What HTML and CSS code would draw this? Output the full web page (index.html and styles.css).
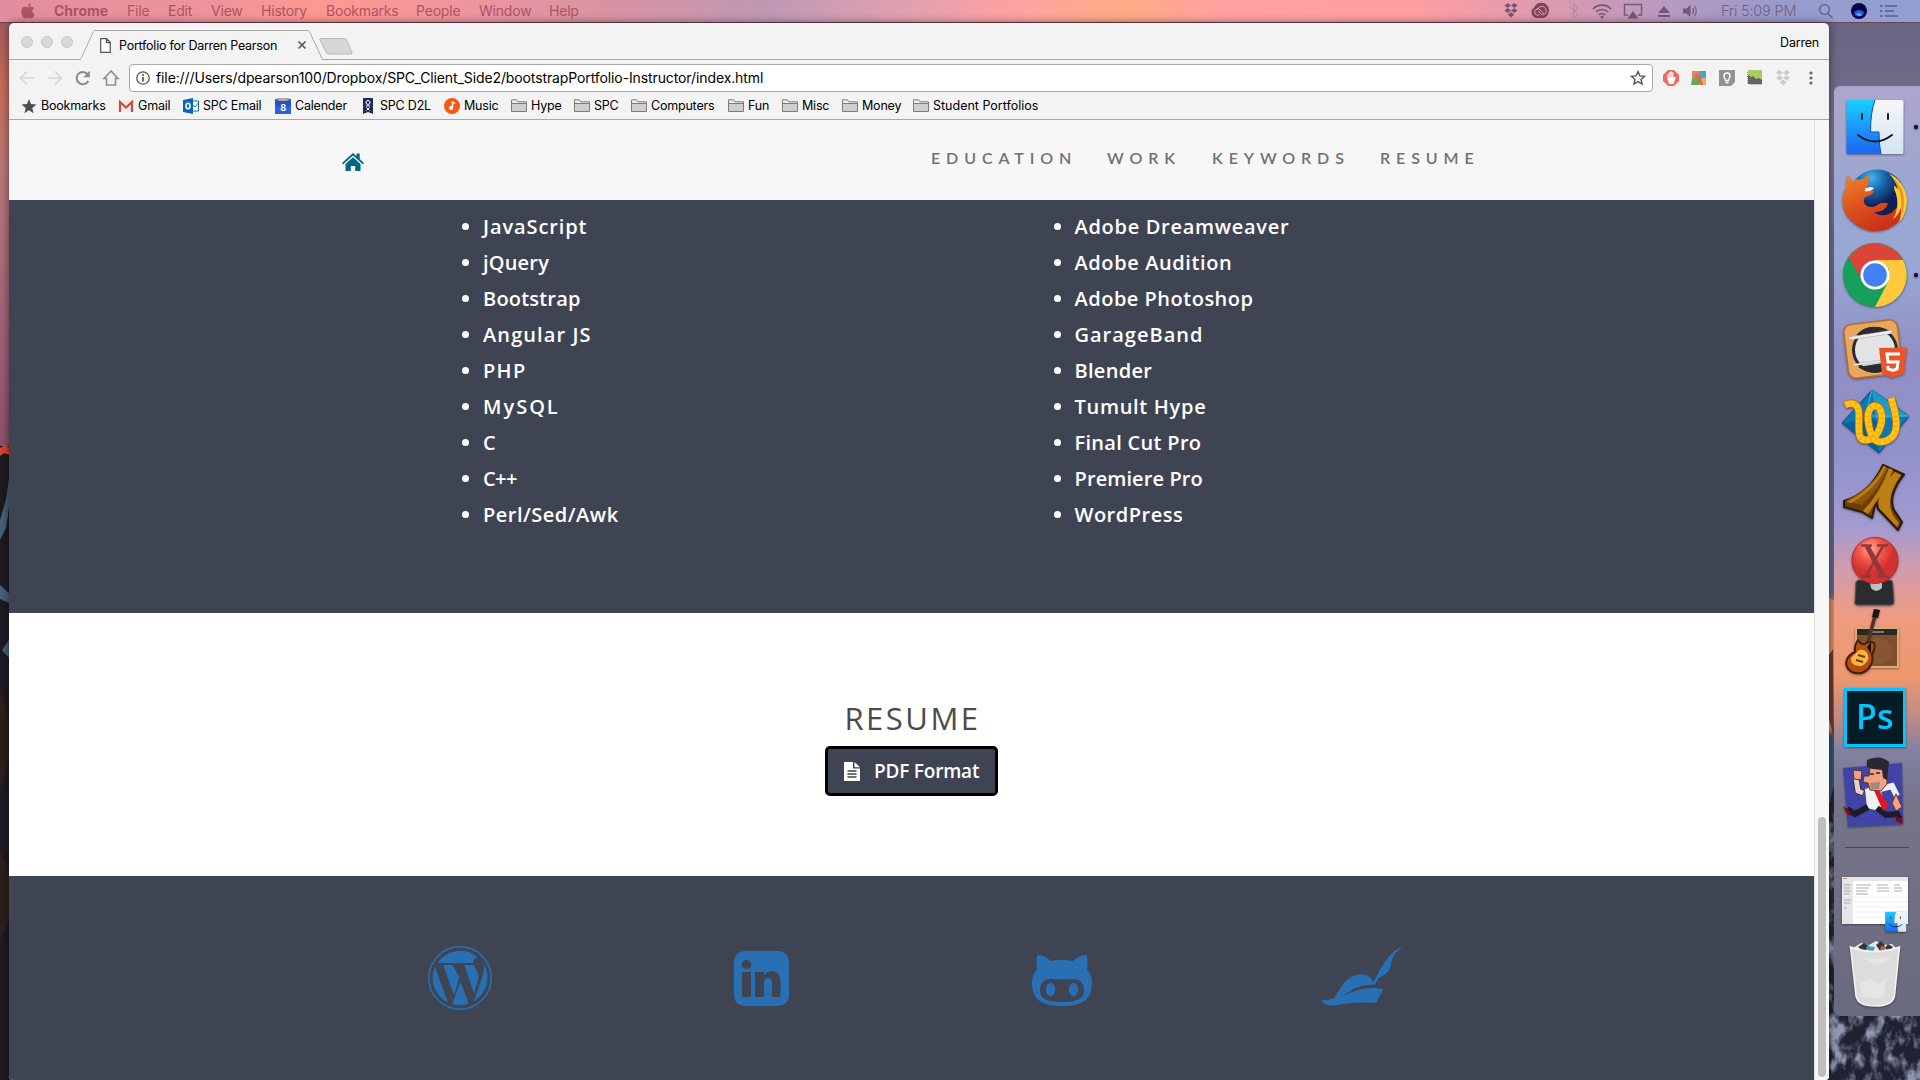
FILE: index.html
```html
<!DOCTYPE html>
<html lang="en">
<head>
<meta charset="utf-8">
<title>Portfolio for Darren Pearson</title>
<link rel="stylesheet" href="styles.css">
</head>
<body>
<svg class="defs" width="0" height="0">
  <symbol id="folder" viewBox="0 0 16 13"><path d="M.5 12.500V.8h5l1.500 2h8.500v9.700z" fill="#ececec" stroke="#7d7d7d"/><path d="M1 5h14v7H1z" fill="#cfcfcf"/><path d="M1 4.500h14" stroke="#7d7d7d"/></symbol>
  <symbol id="dropbox" viewBox="0 0 16 16"><path d="M4.500 0 8 2.600 4.500 5.200 1 2.600zM11.500 0 15 2.600l-3.500 2.600L8 2.600zM4.500 5.400 8 8l-3.500 2.600L1 8zM11.500 5.400 15 8l-3.500 2.600L8 8zM8 9.500l3.500 2.700L8 15.500l-3.500-3.300z" stroke="none"/></symbol>
</svg>
<div class="desktop">
  <svg class="wallpaper" width="1920" height="1080" viewBox="0 0 1920 1080">
    <defs>
      <linearGradient id="dusk" x2="0" y2="1"><stop stop-color="#a05a5c"/><stop offset=".15" stop-color="#c96a58"/><stop offset=".35" stop-color="#b9787a"/><stop offset=".8" stop-color="#9a5d75"/><stop offset="1" stop-color="#8d5069"/></linearGradient>
      <filter id="crags" x="0" y="0" width="1" height="1"><feTurbulence type="fractalNoise" baseFrequency=".07 .045" numOctaves="4" seed="8"/><feColorMatrix values="0 0 0 0 .29  0 0 0 0 .31  0 0 0 0 .43  4 0 0 0 -1.8"/></filter>
    </defs>
    <path d="M0 23h12v425H0z" fill="url(#dusk)"/>
    <path d="M0 446h12v634H0z" fill="#1d1a22"/>
    <path d="M0 448l5-3 7 4v7L4 453l-4 3z" fill="#d8432f"/>
    <path d="M9 478l-3 22-6 20v20l6-12 3-20zM0 585l9 8v10l-9-4zM9 640l-7 10 7 8z" fill="#466078"/>
    <path d="M0 690l9 30v40l-9 30zM0 850l9 20v50l-9 20z" fill="#2b211c"/>
    <path d="M1829 598l5 2v130h-5z" fill="#d98b62"/>
    <path d="M1829 655l4-6 1 90-5-20z" fill="#6b3a32"/>
    <path d="M1829 735h5v280h86v65h-91z" fill="#1f2231"/>
    <path d="M1829 735h5v50l-5 20z" fill="#36516e"/>
    <rect x="1829" y="800" width="91" height="280" filter="url(#crags)"/>
  </svg>
  <header class="menubar">
    <svg class="apple" width="14" height="16" viewBox="0 0 14 16"><path d="M9.800.2c.1 1.700-1.300 3.300-3 3.300C6.600 1.900 8.200.3 9.800.2zM7 4.400c.7 0 1.700-.8 3.200-.7 1.300.1 2.300.6 2.900 1.600-2.700 1.700-2.100 5 .6 6-.8 2.200-2.100 4.200-3.500 4.200-1 0-1.600-.6-2.900-.6s-2 .6-2.900.6C2.300 15.500.2 11.700.2 8.500c0-3.100 1.900-4.700 3.800-4.700 1.200 0 2.300.6 3 .6z"/></svg>
    <nav class="menus">
      <b>Chrome</b><span>File</span><span>Edit</span><span>View</span><span>History</span><span>Bookmarks</span><span>People</span><span>Window</span><span>Help</span>
    </nav>
    <div class="status">
      <svg viewBox="0 0 18 16"><use href="#dropbox" width="18" height="15"/></svg>
      <svg viewBox="0 0 20 16"><path d="M6 15A5.800 5.800 0 0 1 3.500 4.500 7.800 7.800 0 1 1 13 14.900z" fill="#81425c" transform="translate(-1.500 0)"/><path d="M7.500 11.800a3.200 3.200 0 1 1 .3-5.300l4 4.500M5.500 6.500a4.500 4.500 0 1 1 7 5c-1.500.8-3 .3-4-.9L6.500 8" fill="none" stroke="#e2a2b2" stroke-width="1"/></svg>
      <svg class="faint" viewBox="0 0 12 16"><path d="m2 4 8 7-4 4V1l4 4-8 7" fill="none" stroke="#785a77"/></svg>
      <svg viewBox="0 0 20 16"><g fill="none" stroke="#7b5475" stroke-width="1.700"><path d="M1 6a12.500 12.500 0 0 1 18 0M4 9a8.500 8.500 0 0 1 12 0M6.700 11.800a4.800 4.800 0 0 1 6.600 0"/></g><circle cx="10" cy="14" r="1.500"/></svg>
      <svg viewBox="0 0 20 16"><path d="M5 12H1.500V1.500h17V12H15" fill="none" stroke="#765779" stroke-width="1.400"/><path d="m10 8 5.500 7.500h-11z"/></svg>
      <svg viewBox="0 0 12 16"><path d="m6 3 6 7H0zM0 12h12v2H0z"/></svg>
      <svg viewBox="0 0 14 16"><path d="M0 5.500h3.500L7.500 2v12l-4-3.500H0z"/><path d="M9.500 5q2 3 0 6M11.500 3q3.500 5 0 10" fill="none" stroke="#6c6089" stroke-width="1.200"/></svg>
      <span class="clock">Fri 5:09 PM</span>
      <svg viewBox="0 0 16 16"><path d="M10 10.500 14.500 15" stroke="#66608f" stroke-width="1.600"/><circle cx="6.500" cy="6.500" r="4.900" fill="none" stroke="#66608f" stroke-width="1.400"/></svg>
      <svg viewBox="0 0 16 16"><circle cx="8" cy="8" r="8" fill="#060449"/><path d="M3 9q5-4 10 0l-1 3q-4 3-8 0z" fill="#205fdd"/><path d="m5 11 3-1 3 2-3 1z" fill="#8da9f6"/></svg>
      <svg viewBox="0 0 18 16"><path d="M0 3h2.500M0 8h2.500M0 13h2.500M5 3h12M5 8h9M5 13h13" stroke="#595b94" stroke-width="1.700"/></svg>
    </div>
  </header>

  <div class="stage">
  <main class="window">
    <div class="tabstrip">
      <i class="light"></i><i class="light"></i><i class="light"></i>
      <div class="tab">
        <svg class="tab-shape" width="243" height="30" viewBox="0 0 243 30"><path d="M0 28.500 12.500 1.500Q13 .5 14 .5h213q1 0 1.500 1L241 28.500V30H0z" fill="#f3f3f3"/><path d="M0 28.500 12.500 1.500Q13 .5 14 .5h213q1 0 1.500 1L241 28.500" fill="none" stroke="#a8a8a8"/></svg>
        <svg width="11" height="15" viewBox="0 0 11 15"><path d="M.7.700h5.800l3.800 3.800v9.800H.7zM6.500.700v4h4" fill="#fff" stroke="#555" stroke-width="1.200"/></svg>
        <span class="tab-title">Portfolio for Darren Pearson</span>
        <svg width="8" height="8" viewBox="0 0 8 8"><path d="m.5.500 7 7m0-7-7 7" stroke="#5a5a5a" stroke-width="1.700"/></svg>
      </div>
      <svg class="newtab" width="34" height="17" viewBox="0 0 34 17"><path d="M2 .5h23.500q1.500 0 2 1.200L33 14.500q.5 1.500-1 1.500H9.500Q8 16 7.400 14.700L1 2Q.4.500 2 .5z" fill="#d6d6d6" stroke="#b9b9b9"/></svg>
      <span class="user">Darren</span>
    </div>
    <div class="toolbar">
      <svg class="nav-off" viewBox="0 0 16 16"><path d="M15 8H2m6-6.500L1.500 8 8 14.500"/></svg>
      <svg class="nav-off" viewBox="0 0 16 16"><path d="M1 8h13M8 1.500 14.500 8 8 14.500"/></svg>
      <svg viewBox="0 0 16 16"><path d="M13.300 11A6.200 6.200 0 1 1 12.500 4" fill="none" stroke="#8a8a8a" stroke-width="2"/><path d="M14.800.8v6.400H8.500z" fill="#8a8a8a"/></svg>
      <svg viewBox="0 0 16 16"><path d="M8 1 1 8.500h2.500V15h9V8.500H15z" fill="none" stroke="#8f8f8f" stroke-width="1.600"/></svg>
      <div class="address">
        <svg width="14" height="14" viewBox="0 0 14 14"><circle cx="7" cy="7" r="6.200" fill="none" stroke="#555" stroke-width="1.300"/><path d="M7 6v4.500M7 3.200v1.700" stroke="#444" stroke-width="1.600"/></svg>
        <span class="url">file:///Users/dpearson100/Dropbox/SPC_Client_Side2/bootstrapPortfolio-Instructor/index.html</span>
        <svg class="fav" width="16" height="16" viewBox="0 0 16 16"><path d="m8 1.500 1.900 4.400 4.700.4L11 9.400l1.100 4.700L8 11.600l-4.100 2.500L5 9.400 1.400 6.300l4.700-.4z" fill="none" stroke="#555" stroke-width="1.400"/></svg>
      </div>
      <div class="extensions">
        <svg viewBox="0 0 16 16"><path d="M5 0h6l5 5v6l-5 5H5l-5-5V5z" fill="#ec6a60"/><path d="M4.300 9V4.500h1.500v-2h1.500v-1h1.600v1h1.500v5l1.500-.7.900.9-2.500 6.300H6.200z" fill="#fff"/><path d="M5.900 5v3m1.600-4v3.500m1.500-3.500v3.500" stroke="#ec6a60" stroke-width=".5"/></svg>
        <svg viewBox="0 0 16 16"><path d="M1 1h7v7H1z" fill="#e7835e"/><path d="M8 1h7v7H8z" fill="#4ba3c6"/><path d="M1 8h7v7H0z" fill="#64a957"/><path d="M8 8h7v7H8z" fill="#dfb356"/><path d="m6 3 4 5 2 7H9l-2-5-4-4z" fill="#d66a4d"/></svg>
        <svg viewBox="0 0 16 16"><path d="M0 0h16v12l-4 4H0z" fill="#929292"/><path d="M6.500 10.500C6.500 9 5 8.300 5 6a3 3 0 0 1 6 0c0 2.300-1.500 3-1.500 4.500zM6.500 12.500h3" fill="none" stroke="#fff" stroke-width="1.400"/></svg>
        <svg viewBox="0 0 16 16"><path d="M1 0h14v14H1z" fill="#a8cc62"/><path d="m1 5 3 2 2-1 3 3 3-1 3 2v4H1z" fill="#606662"/><path d="M.5 2v12m3 .5h12" stroke="#999" stroke-dasharray="1 1"/></svg>
        <svg viewBox="0 0 16 16" fill="#ccc"><use href="#dropbox"/></svg>
        <svg viewBox="0 0 16 16" fill="#686868"><circle cx="8" cy="3" r="1.600"/><circle cx="8" cy="8" r="1.600"/><circle cx="8" cy="13" r="1.600"/></svg>
      </div>
    </div>
    <div class="bookmarks">
      <a><svg viewBox="0 0 16 16"><path d="m8 1 2 5 5.500.4-4.200 3.500 1.300 5.300L8 12.300l-4.600 2.900 1.300-5.300L.5 6.400 6 6z" fill="#4f4f4f"/></svg><span>Bookmarks</span></a>
      <a><svg viewBox="0 0 16 16"><path d="M1 3h14v11H1z" fill="#ececec"/><path d="M2 14V4l6 5.500L14 4v10" fill="none" stroke="#d3483c" stroke-width="2.200"/></svg><span>Gmail</span></a>
      <a><svg viewBox="0 0 16 16"><path d="M8 3h7.500v10H8z" fill="#fff" stroke="#1668b5"/><path d="m9 6 3 3 4-5" fill="none" stroke="#1668b5"/><path d="M0 2 10 0v16L0 14z" fill="#0668bb"/><ellipse cx="5" cy="8" rx="2" ry="2.800" fill="none" stroke="#fff" stroke-width="1.500"/></svg><span>SPC Email</span></a>
      <a><svg viewBox="0 0 16 16"><path d="M2 0h12v3H2z" fill="#aaa"/><path d="M0 1h2l2 2h8l2-2h2v15H0z" fill="#2b62df"/><path d="M0 3h16v5H0z" fill="#2353c4"/><text x="8" y="12.500" class="cal">8</text></svg><span>Calender</span></a>
      <a><svg viewBox="0 0 16 16"><path d="M3 0h10v16l-5-2-5 2z" fill="#222a60"/><circle cx="8" cy="4.500" r="2" fill="none" stroke="#fff"/><path d="M6 8h4M6.500 9.500l3 3m0-3-3 3" stroke="#fff"/></svg><span>SPC D2L</span></a>
      <a><svg viewBox="0 0 16 16"><circle cx="8" cy="8" r="8" fill="#fb5614"/><circle cx="7" cy="10" r="2" fill="#fff"/><path d="M8.500 10V4l2.500 1.500" fill="none" stroke="#fff" stroke-width="1.400"/></svg><span>Music</span></a>
      <a><svg class="fold" viewBox="0 0 16 13"><use href="#folder"/></svg><span>Hype</span></a>
      <a><svg class="fold" viewBox="0 0 16 13"><use href="#folder"/></svg><span>SPC</span></a>
      <a><svg class="fold" viewBox="0 0 16 13"><use href="#folder"/></svg><span>Computers</span></a>
      <a><svg class="fold" viewBox="0 0 16 13"><use href="#folder"/></svg><span>Fun</span></a>
      <a><svg class="fold" viewBox="0 0 16 13"><use href="#folder"/></svg><span>Misc</span></a>
      <a><svg class="fold" viewBox="0 0 16 13"><use href="#folder"/></svg><span>Money</span></a>
      <a><svg class="fold" viewBox="0 0 16 13"><use href="#folder"/></svg><span class="long">Student Portfolios</span></a>
    </div>

    <div class="viewport">
      <div class="page">
        <div class="navbar">
          <svg class="home" width="22" height="18" viewBox="0 0 22 18"><path d="M11 0 14.500 3.200V.5h3.200v5.600L22 10l-1.200 1.200L11 2.400l-9.800 8.800L0 10z"/><path d="M11 4.200 18.500 11v7h-5.300v-5H8.800v5H3.500v-7z"/></svg>
          <nav class="links"><a>EDUCATION</a><a>WORK</a><a>KEYWORDS</a><a>RESUME</a></nav>
        </div>
        <section class="skills">
          <ul class="languages"><li>JavaScript</li><li>jQuery</li><li>Bootstrap</li><li>Angular JS</li><li>PHP</li><li>MySQL</li><li>C</li><li>C++</li><li>Perl/Sed/Awk</li></ul>
          <ul class="apps"><li>Adobe Dreamweaver</li><li>Adobe Audition</li><li>Adobe Photoshop</li><li>GarageBand</li><li>Blender</li><li>Tumult Hype</li><li>Final Cut Pro</li><li>Premiere Pro</li><li>WordPress</li></ul>
        </section>
        <section class="resume">
          <h2>RESUME</h2>
          <a class="pdf"><svg width="16" height="19" viewBox="0 0 16 19"><path d="M0 0h9v6.500h7V19H0zM10.500 0 16 5.200h-5.500z" fill="#fff"/><path d="M3.500 9h9M3.500 12h9M3.500 15h9" stroke="#3f4453" stroke-width="1.300"/></svg><span>PDF Format</span></a>
        </section>
        <footer class="social">
          <svg width="64" height="64" viewBox="0 0 64 64"><circle cx="32" cy="32" r="31.200" fill="none" stroke="#286fb4" stroke-width="1.500"/><path d="M9.500 17.300A27.200 27.200 0 0 1 50.400 11.700c-3.400-.2-5.400 2-5.100 5.300H9.500zM7 20.800 20 56.400A27.200 27.200 0 0 1 7 20.800zM32.500 35.500 40.700 57.500q-8 3-16.500.7zM56.300 19A27.200 27.200 0 0 1 45.800 55.400L54.500 30q2-6 1.800-11zM15 19h9.500l7 12-5.500 18zM36.500 19h9.200c1 3 4.800 6.500 4.800 12.500l-4.500 16z"/></svg>
          <svg width="55" height="55" viewBox="0 0 55 55"><rect width="55" height="55" rx="10.500"/><g fill="#3f4453"><ellipse cx="12.500" cy="13.500" rx="4.900" ry="4.400"/><path d="M8 21h9v25H8zM21 21h9v3.500c2-3 4.500-4.200 7.500-4.200 6.500 0 9 4.500 9 11V46H38V32.500c0-3.500-1.200-5.500-4-5.500s-4 2.400-4 5v14h-9z"/></g></svg>
          <svg width="60" height="51" viewBox="0 0 60 51"><path fill-rule="evenodd" d="M5.500 0C11 .3 15 2.700 19 6q11-2 22 0C45 2.700 49 .3 54.500 0q2 7 .5 14.500c4 5 5 9 5 14C60 46 48 51 30 51S0 46 0 28.500c0-5 1-9 5-14Q3.500 7 5.500 0zM8 35c0 9 7 12 22 12s22-3 22-12c0-7-4-11-10-11-8 0-16 1-24 0-6 0-10 4-10 11z"/><ellipse cx="18.500" cy="34.500" rx="4.600" ry="6.700"/><ellipse cx="41.500" cy="34.500" rx="4.600" ry="6.700"/></svg>
          <svg width="82" height="60" viewBox="0 0 82 60"><path d="M0 54.500c5-.5 9-.8 13.500-2.200C20 39 28 29 39 28.300 46 28 51 32 52 36.500 58 27 66 6 82 0c-9 7-11 12-12.500 20-1.500 8-8 9-12 12.500L53.500 39C41 38 31 43 20.500 51 32 45 44 40 62.500 43L55 57c-15-1-28 0-40 2.200C9 60 3 59 0 54.500z"/></svg>
        </footer>
      </div>
      <div class="scrollbar"><i></i></div>
    </div>
  </main>

  <aside class="dock">
    <svg viewBox="0 0 86 74"><defs><linearGradient id="fb" x2="0" y2="1"><stop stop-color="#19cfff"/><stop offset="1" stop-color="#1c64f2"/></linearGradient><linearGradient id="fw" x2="0" y2="1"><stop stop-color="#f6f6f8"/><stop offset="1" stop-color="#d4e4f3"/></linearGradient></defs><g id="finder"><rect x="12.500" y="10" width="57" height="54" rx="1.500" fill="url(#fb)"/><path d="M41 10h27q1.500 0 1.500 1.500v51q0 1.500-1.500 1.500H47q-2-9-2-22h-8.500q0-20 4.500-32z" fill="url(#fw)"/><path d="M41 10q-4.500 12-4.500 32H45q0 13 2 22" fill="none" stroke="#14509c"/><path d="M28 24v5M54 24v5" stroke="#10232e" stroke-width="2" stroke-linecap="round"/><path d="M24 45q17 13 34 0" fill="none" stroke="#101820" stroke-width="2" stroke-linecap="round"/></g><circle cx="82" cy="37" r="2.200" fill="#10184a"/></svg>
    <svg viewBox="0 0 86 74"><defs><radialGradient id="globe" cx=".4" cy=".15"><stop stop-color="#42b6ee"/><stop offset=".5" stop-color="#1565a8"/><stop offset="1" stop-color="#101f55"/></radialGradient><linearGradient id="fox" x2=".5" y2="1"><stop stop-color="#ee8a2a"/><stop offset=".5" stop-color="#e0541f"/><stop offset="1" stop-color="#c9301a"/></linearGradient></defs><g transform="translate(0 1.500)"><circle cx="43" cy="32" r="28" fill="url(#globe)"/><path d="M14 9l4 7q5-3 9-2 4-1 7-5 2 8-1 13l7 4q-2 4-8 5-4 3-1 8 6 5 13 0 5-3 10-1-2 8-14 9 10 6 19-1 8-7 8-19 5 4 5 12-2 18-20 25-16 5-29-4Q8 50 8.500 35q0-8 4-14-1-6 1.500-12z" fill="url(#fox)"/><path d="M55 8q15 7 18 26 0 14-8 23 3-9 2-15-2 7-8 12 7-13 3-26-2-3-2-8 2 1 4 4-2-9-9-16z" fill="#ffcd32"/><path d="M61 15q9 12 7 27M66 22q5 10 2 25" fill="none" stroke="#ea8a20" stroke-width="1.500"/><path d="M31 23q7-3 9 0-3 3-9 3z" fill="#fff1df"/></g></svg>
    <svg viewBox="0 0 86 74"><circle cx="41" cy="37" r="32" fill="#16a05a"/><path d="M14.500 19.500a32 32 0 0 1 54.500 2.500H41q-13 2-14 18z" fill="#da4439"/><path d="M69 22A32 32 0 0 1 41 69l12.500-24L55 31 41 22z" fill="#ffc83d"/><circle cx="41" cy="37" r="14.500" fill="#fff"/><circle cx="41" cy="37" r="11.800" fill="#437ff5"/><circle cx="82" cy="37" r="2.200" fill="#10184a"/></svg>
    <svg viewBox="0 0 86 74"><rect x="12" y="10" width="54" height="54" rx="8" fill="#e9a75b" stroke="#b66f2d" stroke-width="1.500" transform="rotate(-7 39 37)"/><circle cx="41" cy="38" r="23" fill="#292b30"/><circle cx="41" cy="38" r="20" fill="#e2e3e4"/><path d="M22 23q9-10 22-8 9 1 14 6zM24 55l25-4 2 7q-15 6-27-3z" fill="#292b30"/><path d="M15 25l43-7v3.500L15 28zM19 52l30-4v2l-30 4z" fill="#f0f0f0" stroke="#888" stroke-width=".4"/><path d="m45 36 28-.5-3 26.500-12 4-10-4z" fill="#e95428"/><path d="M66 42H53l1 8h10l-1 7-4 1.500-5-1.500v-3" fill="none" stroke="#fff" stroke-width="3"/></svg>
    <svg viewBox="0 0 86 74"><path d="m38 4 37 26-30 37L8 37z" fill="#0879b4" stroke="#034d82"/><path d="m38 4 37 26-33 3z" fill="#1a9cc6"/><path d="M8 37l34-4 3 34z" fill="#065f9c"/><path d="M38 4 31 30l44 0" fill="none" stroke="#41b9d9"/><g fill="none"><path d="M11 19c9-4 14 0 14 10 0 16-2 26 8 25 12-1 18-20 13-31-5-7-13-2-12 11 2 18 8 26 20 20 10-5 11-17 3-42" stroke="#b66e08" stroke-width="8"/><path d="M11 19c9-4 14 0 14 10 0 16-2 26 8 25 12-1 18-20 13-31-5-7-13-2-12 11 2 18 8 26 20 20 10-5 11-17 3-42" stroke="#ffc31c" stroke-width="6.500"/><path d="M11 19c9-4 14 0 14 10 0 16-2 26 8 25 12-1 18-20 13-31-5-7-13-2-12 11 2 18 8 26 20 20 10-5 11-17 3-42" stroke="#eda512" stroke-width="5" stroke-dasharray="1 4"/></g></svg>
    <svg viewBox="0 0 86 74"><path d="M49 5 70 14.500C58 29 56 42 60 50l8 12-4 8-20-21-2-8-4 17-10-6-18-5v-6C30 35 42 20 49 5z" fill="#6b3e05" stroke="#2d1905" stroke-width="2" stroke-linejoin="round"/><path d="M49 6Q38 28 11 41l17 4Q46 28 54 8z" fill="#8d5707"/><path d="M50 6Q40 28 13 42l4 1Q42 29 52 7zM55 8Q47 32 29 51l5 3Q51 30 59 10zM61 12Q42 30 45 48l18 19 2-4Q46 44 67 15z" fill="#bd7e14"/></svg>
    <svg viewBox="0 0 86 74"><defs><radialGradient id="red" cx=".4" cy=".25"><stop stop-color="#ffb09c"/><stop offset=".5" stop-color="#f4574a"/><stop offset="1" stop-color="#d2322d"/></radialGradient></defs><path d="M24 46h32q2 0 2.500 2L60 67q0 4-3 4H24q-4 0-3-4l1-19z" fill="#2b2c2f" stroke="#555"/><path d="M35 44h13v10q-6 6-11 0z" fill="#bdbec0"/><circle cx="41" cy="26.500" r="23" fill="url(#red)" stroke="#b62b28"/><path d="M27 11.500h11M43 11.500h11M27 42.500h10M43 42.500h12" stroke="#93383a" stroke-width="2.500"/><path d="m33 12 16 30" stroke="#93383a" stroke-width="5"/><path d="M49 12 32 42" stroke="#93383a" stroke-width="2.500"/></svg>
    <svg viewBox="0 0 86 74"><rect x="22" y="20" width="42" height="39" fill="#80502e" stroke="#d8ab69" stroke-width="2"/><path d="M23 21h40v6H23z" fill="#272828"/><path d="M38 24h12" stroke="#ccc"/><circle cx="45" cy="43" r="13" fill="#8b5a36" opacity=".6"/><path d="M42 4 31 46" stroke="#543227" stroke-width="3.500"/><path d="m40 1 6 1-2 8-6-1z" fill="#171717"/><path d="M24 32q3 5 7 4 4-4 9-1 2 5-2 11 2 8-3 14-7 8-17 4-8-5-5-13 3-5 8-7-1-7 3-12z" fill="#b84a18" stroke="#402012" stroke-width="2"/><path d="M25 42q7-1 9 5t-6 11q-12 0-11-8z" fill="#ffb43c"/><path d="m24 47 7 2m-9 3 7 2" stroke="#6a3a14" stroke-width="2"/><path d="m33 39 4-5v12z" fill="#16120e"/></svg>
    <svg viewBox="0 0 86 74"><rect x="11.500" y="7.500" width="59" height="56" fill="#031c25" stroke="#07c3fc" stroke-width="3"/><text x="22" y="47" class="ps">Ps</text></svg>
    <svg viewBox="0 0 86 74"><path d="m9 12 59-5 1 61-55 3z" fill="#4144a7"/><path d="M29 37l-5-2-2-13" fill="none" stroke="#222" stroke-width="6.500"/><path d="M29 37l-5-2-2-13" fill="none" stroke="#e8cfc4" stroke-width="5"/><path d="m46 33 12-3 5 10" fill="none" stroke="#eef0f3" stroke-width="6"/><path d="m31 33 14-4 5 16-5 10-12-3z" fill="#eef0f3"/><path d="m34 51-13 7-8-5M43 52l9 7 11-1 3 5" fill="none" stroke="#1d1d2a" stroke-width="6"/><path d="m39 32 4-1 12 19-6 5z" fill="#df1624"/><path d="M36 12h17v16l-6 7-11-1-2-7-5-1 1-6h5zM19 14l9 1-1 9-7-1zM62 38l6 13-6 4-4-8z" fill="#f3a083" stroke="#652f30"/><path d="M33 11 33 4q13-6 22 2l-2 18-4-2-1-8-9-1z" fill="#292832"/><path d="m36 27 10-1-1 7-8 0z" fill="#a98478"/><path d="M36 18h4m2-1h4" stroke="#292832" stroke-width="1.500"/><path d="m9 50 7 5 1 5-4-2zM61 60l8 3-1 5-6-3z" fill="#7a0c17"/></svg>
    <hr>
    <svg viewBox="0 0 86 74"><path d="M8 9h66v47H8z" fill="#fff"/><path d="M8 9h66v4H8zM8 13h11v43H8z" fill="#e6e6e8"/><path d="M10 17h7m-7 3h6m-6 3h7m-7 3h5m-5 6h7m-7 3h6m-6 5h3M22 17h15m-15 3h13m-13 3h11m-11 3h12M43 17h11m-11 3h12m-12 3h12M60 17h6m-6 3h8m-8 3h8" stroke="#aaa"/><path d="M9 10.500h4" stroke="#df885c"/><path d="M20 29h54M20 34h54M20 39h54M20 44h54M20 49h54" stroke="#eee"/><use href="#finder" transform="translate(46.500 40) scale(.37)"/></svg>
    <svg viewBox="0 0 86 74"><path d="m19 9 8-5 8 2 7-4 7 4 9-1 6 6-15 6-22-2z" fill="#e8e8e6"/><path d="m24 8 6-4 5 3-4 6zM42 6l5-4 4 5-5 5zM54 5l5 3-4 5-4-4z" fill="#38383c"/><path d="m33 7 8 1-2 5-7-2z" fill="#39a6a8"/><path d="m47 7 5 1-2 5-4-1z" fill="#bf6540"/><path d="M16.500 8q24 9 49 0l-5 49q-2 10-19.500 10T22 57z" fill="#dcdcdc" stroke="#f5f5f5" stroke-width="1.500"/><path d="M24 17q16 6 34 0-8 10-18 8zM26 45q10-8 14-3t12-2l-2 16q-8 6-22 1z" fill="#e6e5e4"/></svg>
  </aside>
  </div>
</div>
</body>
</html>
```
FILE: styles.css
```css
* { box-sizing: border-box; }
body { margin: 0; font-family: Inter, "Liberation Sans", sans-serif; }
svg { display: block; flex: none; overflow: visible; }
.defs { position: absolute; }
.desktop {
  position: relative; width: 1920px; height: 1080px; overflow: hidden; display: flex; flex-direction: column;
  background: linear-gradient(#666280 0, #79708d 150px, #5e6288 330px, #5f628b 590px, #ba6d56 612px, #8a584c 670px, #e79772 725px, #2b3c57 740px, #25283a 800px, #252a3d 1080px);
}
.wallpaper { position: absolute; left: 0; top: 0; }
.menubar {
  position: relative; height: 23px; flex: none; display: flex; align-items: center; padding-left: 21px; border-bottom: 1px solid #6b4450;
  color: #ad5560; font-size: 14px;
  background: linear-gradient(90deg, #e28e9e 0, #ed939c 200px, #ff9891 330px, #eb95a0 480px, #d792a3 620px, #bf99b4 770px, #dfa0b0 900px, #fda1a3 1010px, #ffaa85 1120px, #ffa1a0 1220px, #ff9ea2 1410px, #e19bae 1530px, #c399ba 1630px, #999acb 1770px, #91a0d4 1920px);
}
.apple { fill: #ad5560; margin-right: 19px; }
.menus { display: grid; grid-template-columns: 73px 41px 43px 50px 65px 90px 63px 70px 60px; letter-spacing: -.2px; white-space: nowrap; margin-top: -1px; }
.menus b { font-weight: 700; letter-spacing: 0; }
.status { margin-left: auto; display: grid; grid-template-columns: 30px 36px 24px 31px 35px 25px 38px 97px 33px 29px 37px; align-items: center; padding-right: 3px; fill: #765676; }
.status svg { height: 16px; justify-self: start; }
.faint { opacity: .3; }
.clock { color: #746080; font-size: 14.5px; font-weight: 300; white-space: nowrap; letter-spacing: -.2px; margin-top: -1px; }
.stage { position: relative; display: flex; flex: 1; }
.window { width: 1820px; height: 1057px; margin-left: 9px; flex: none; background: #f3f3f3; border-radius: 5px 5px 4px 4px; overflow: hidden; display: flex; flex-direction: column; box-shadow: 0 0 8px #0008; }
.tabstrip { height: 37px; flex: none; display: flex; align-items: center; padding: 2px 10px 0 12px; border-bottom: 1px solid #a8a8a8; }
.light { width: 12px; height: 12px; border: 1px solid #c8c8c8; border-radius: 50%; background: #d8d8d8; margin-right: 8px; }
.tab { position: relative; width: 241px; height: 30px; margin: 5px 0 0; display: flex; align-items: center; padding: 1px 0 0 19px; }
.tab > * { position: relative; }
.tab .tab-shape { position: absolute; left: 0; top: 0; }
.tab-title { width: 179px; margin-left: 8px; font-size: 12.5px; letter-spacing: -.25px; white-space: nowrap; }
.newtab { margin: 8px 0 0 -3px; }
.user { margin: 0 0 0 auto; font-size: 12.5px; letter-spacing: -.2px; }
.toolbar { height: 36px; flex: none; display: flex; align-items: center; padding: 0 9px 0 10px; }
.toolbar > svg { width: 16px; height: 16px; margin-right: 12px; }
.toolbar > svg:nth-child(4) { margin-right: 10px; }
.nav-off { fill: none; stroke: #d6d6d6; stroke-width: 1.7; }
.address { width: 1524px; height: 28px; border: 1px solid #a8a8a8; border-radius: 4px; background: #fff; display: flex; align-items: center; padding: 0 6px 0 6px; }
.url { margin: -2px 0 0 6px; font-size: 14px; letter-spacing: -.11px; white-space: nowrap; }
.fav { margin-left: auto; }
.extensions { display: flex; gap: 12px; margin-left: 10px; }
.extensions svg { width: 16px; height: 16px; }
.bookmarks { height: 24px; flex: none; display: grid; align-items: center; padding: 0 0 4px 12px; border-bottom: 1px solid #a8a8a8; grid-template-columns: 97px 65px 92px 85px 84px 67px 63px 57px 97px 54px 60px 71px 130px; font-size: 12.5px; letter-spacing: -.2px; white-space: nowrap; }
.bookmarks a { display: flex; align-items: center; gap: 4px; }
.bookmarks svg { width: 16px; height: 16px; }
.bookmarks .fold { height: 13px; }
.bookmarks .long { letter-spacing: 0; }
.cal { font: 700 9px Inter, sans-serif; fill: #fff; text-anchor: middle; }
.viewport { flex: 1; display: flex; min-height: 0; }
.page { width: 1805px; display: flex; flex-direction: column; font-family: "Open Sans", sans-serif; }
.scrollbar { width: 15px; border-left: 1px solid #dedede; background: #f7f7f7; padding: 697px 3px 3px; }
.scrollbar i { display: block; height: 260px; border-radius: 4px; background: #bebebe; }
.navbar { height: 80px; flex: none; background: #f7f7f7; display: flex; align-items: center; padding: 2px 0 0 333px; }
.home { fill: #006687; margin-top: 1px; }
.links { display: grid; grid-template-columns: 176px 105px 168px 120px; margin: -7px 0 0 567px; font: 600 16px Lato, sans-serif; letter-spacing: 5.9px; color: #707070; }
.skills { height: 413px; flex: none; display: flex; background: #3f4453; color: #fff; padding: 9px 0 0 474px; }
.skills ul { margin: 0; padding: 0; width: 591.5px; font-size: 20px; line-height: 36px; font-weight: 600; letter-spacing: .5px; }
.languages li:nth-child(1) { letter-spacing: .9px; }
.languages li:nth-child(2), .languages li:nth-child(3) { letter-spacing: .2px; }
.languages li:nth-child(4) { letter-spacing: 1.1px; }
.languages li:nth-child(5) { letter-spacing: 1.3px; }
.languages li:nth-child(6) { letter-spacing: 2px; }
.languages li:nth-child(8) { letter-spacing: -.6px; }
.apps li:nth-child(1) { letter-spacing: .7px; }
.apps li:nth-child(2) { letter-spacing: .6px; }
.apps li:nth-child(4) { letter-spacing: 1px; }
.apps li:nth-child(5), .apps li:nth-child(7) { letter-spacing: .3px; }
.apps li:nth-child(6) { letter-spacing: .7px; }
.apps li:nth-child(8) { letter-spacing: .1px; }
.resume { height: 263px; flex: none; background: #fff; display: flex; flex-direction: column; align-items: center; padding: 83px 0 0; }
.resume h2 { margin: 0 0 0 2px; font-weight: 400; font-size: 31px; line-height: 44px; letter-spacing: 2.5px; color: #4b4b4b; }
.pdf { width: 173px; height: 50px; margin: 6px 0 0; border: 3px solid #000; border-radius: 5px; background: #3f4453; color: #fff; display: flex; align-items: center; padding-left: 16px; gap: 14px; font-size: 19px; font-weight: 600; letter-spacing: -.2px; white-space: nowrap; }
.social { flex: 1; background: #3f4453; fill: #286fb4; display: flex; align-items: flex-start; padding: 70px 0 0 419px; }
.social svg:nth-child(2) { margin: 5px 0 0 242px; }
.social svg:nth-child(3) { margin: 9px 0 0 243px; }
.social svg:nth-child(4) { margin: 0 0 0 229px; }
.dock { width: 86px; height: 930px; margin: 63px 0 0 5px; padding-top: 4px; border-radius: 6px 0 0 6px; background: linear-gradient(#aea5cc 0, #9aa7d2 110px, #98a7d3 180px, #918fc4 270px, #9292cb 370px, #a29bd1 440px, #cf9baf 480px, #ee9b82 530px, #ed986e 590px, #b98a87 635px, #8281a0 665px, #757489 720px, #6a6a7f 930px); }
.dock svg { width: 86px; height: 74px; filter: drop-shadow(0 1px 1px #0006); }
.dock hr { width: 64px; height: 1px; margin: 17px 0 20px 11px; border: 0; background: #46465b; }
.dock svg:nth-last-child(2) { margin-bottom: -3px; }
.ps { font: 600 34px "Open Sans", sans-serif; fill: #08c4fd; }
```
